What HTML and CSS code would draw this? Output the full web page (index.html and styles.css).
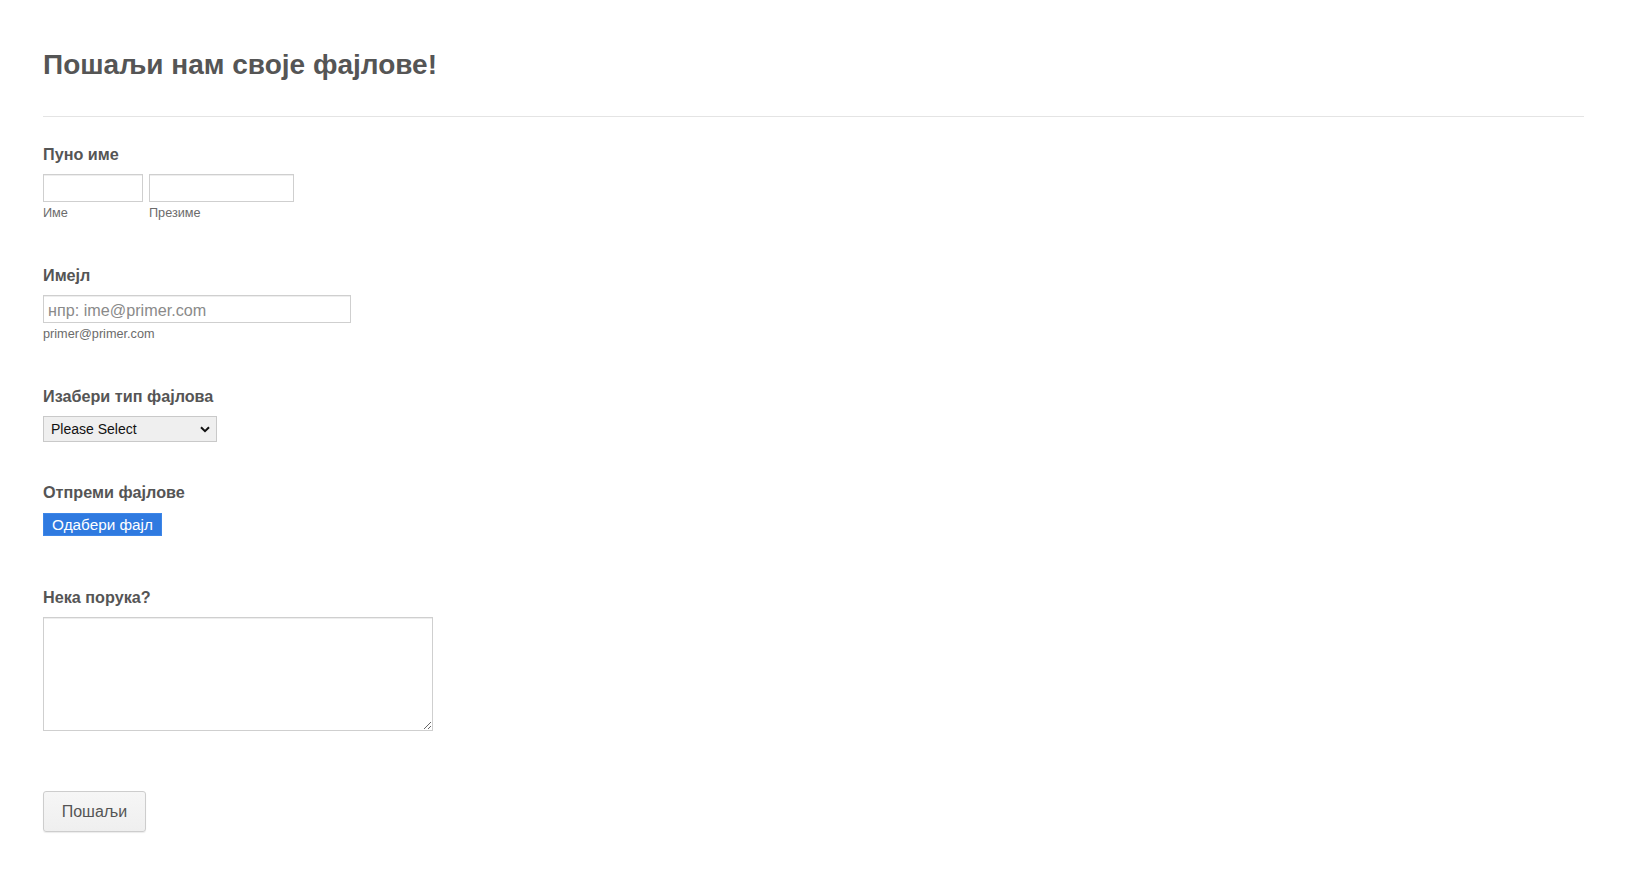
FILE: index.html
```html
<!DOCTYPE html>
<html lang="sr">
<head>
<meta charset="utf-8">
<title>Пошаљи нам своје фајлове!</title>
<link rel="stylesheet" href="styles.css">
</head>
<body>
<form class="page">
  <h1 class="title">Пошаљи нам своје фајлове!</h1>
  <hr class="divider">

  <div class="field field-name">
    <label class="label">Пуно име</label>
    <div class="name-row">
      <div class="name-part">
        <input class="input input-first" type="text">
        <span class="sublabel">Име</span>
      </div>
      <div class="name-part">
        <input class="input input-last" type="text">
        <span class="sublabel">Презиме</span>
      </div>
    </div>
  </div>

  <div class="field field-email">
    <label class="label">Имејл</label>
    <input class="input input-email" type="text" placeholder="нпр: ime@primer.com">
    <span class="sublabel">primer@primer.com</span>
  </div>

  <div class="field field-select">
    <label class="label">Изабери тип фајлова</label>
    <div class="select">
      <span class="select-text">Please Select</span>
      <svg class="chevron" width="10" height="7" viewBox="0 0 10 7"><path d="M1 1.2 L5 5.2 L9 1.2" fill="none" stroke="#111" stroke-width="2"/></svg>
    </div>
  </div>

  <div class="field field-upload">
    <label class="label">Отпреми фајлове</label>
    <div class="upload-btn">Одабери фајл</div>
  </div>

  <div class="field field-message">
    <label class="label">Нека порука?</label>
    <textarea class="textarea"></textarea>
  </div>

  <button class="submit" type="button">Пошаљи</button>
</form>
</body>
</html>
```
FILE: styles.css
```css
html, body {
  margin: 0;
  padding: 0;
  background: #fff;
}

.page {
  padding: 48px 44px 40px 43px;
  font-family: "Liberation Sans", Arial, sans-serif;
  color: #555;
}

.title {
  margin: 0;
  font-size: 28px;
  line-height: 34px;
  font-weight: bold;
  color: #555;
}

.divider {
  margin: 34px 0 27px 0;
  border: 0;
  border-top: 1px solid #e4e4e4;
  height: 0;
}

.field {
  display: flex;
  flex-direction: column;
  align-items: flex-start;
}

.label {
  display: block;
  font-size: 16.2px;
  line-height: 20px;
  font-weight: bold;
  color: #555;
}

.field-name { margin-bottom: 44px; }
.field-email { margin-bottom: 44px; }
.field-select { margin-bottom: 40px; }
.field-upload { margin-bottom: 51px; }

.name-row {
  display: flex;
  gap: 6px;
  margin-top: 10px;
}

.name-part {
  display: flex;
  flex-direction: column;
}

.input {
  box-sizing: border-box;
  height: 28px;
  margin: 0;
  border: 1px solid #cfcfcf;
  box-shadow: inset 0 1px 0 #eee;
  padding: 3px 4px 1px 4px;
  font-family: "Liberation Sans", Arial, sans-serif;
  font-size: 16.2px;
  color: #333;
  background: #fff;
  outline: none;
}

.input::placeholder {
  color: #8a8a8a;
}

.input-first { width: 100px; }
.input-last { width: 145px; }
.input-email { width: 308px; margin-top: 10px; }

.sublabel {
  display: block;
  margin-top: 4px;
  font-size: 12.7px;
  line-height: 15px;
  color: #6b6b6b;
}

.select {
  box-sizing: border-box;
  margin-top: 10px;
  width: 174px;
  height: 26px;
  border: 1px solid #c9c9c9;
  background: #efefef;
  display: flex;
  align-items: center;
  justify-content: space-between;
  padding: 0 6px 0 7px;
  font-size: 14px;
  color: #111;
}

.chevron { display: block; }

.upload-btn {
  margin-top: 11px;
  box-sizing: border-box;
  width: 119px;
  height: 23px;
  background: #2f7ae0;
  border: 1px solid #3d86e8;
  color: #fff;
  font-size: 15.3px;
  line-height: 21px;
  text-align: center;
}

.textarea {
  box-sizing: border-box;
  margin: 10px 0 0 0;
  width: 390px;
  height: 114px;
  border: 1px solid #cfcfcf;
  box-shadow: inset 0 1px 0 #eee;
  background: #fff;
  font-family: "Liberation Sans", Arial, sans-serif;
  font-size: 16px;
  display: block;
  outline: none;
}

.submit {
  margin-top: 60px;
  box-sizing: border-box;
  width: 103px;
  height: 41px;
  border: 1px solid #cdcdcd;
  border-radius: 3px;
  background: linear-gradient(#f6f6f6, #efefef);
  box-shadow: 0 1px 1px rgba(0,0,0,0.08);
  font-family: "Liberation Sans", Arial, sans-serif;
  font-size: 16px;
  color: #555;
  padding: 0;
  cursor: pointer;
}
```
